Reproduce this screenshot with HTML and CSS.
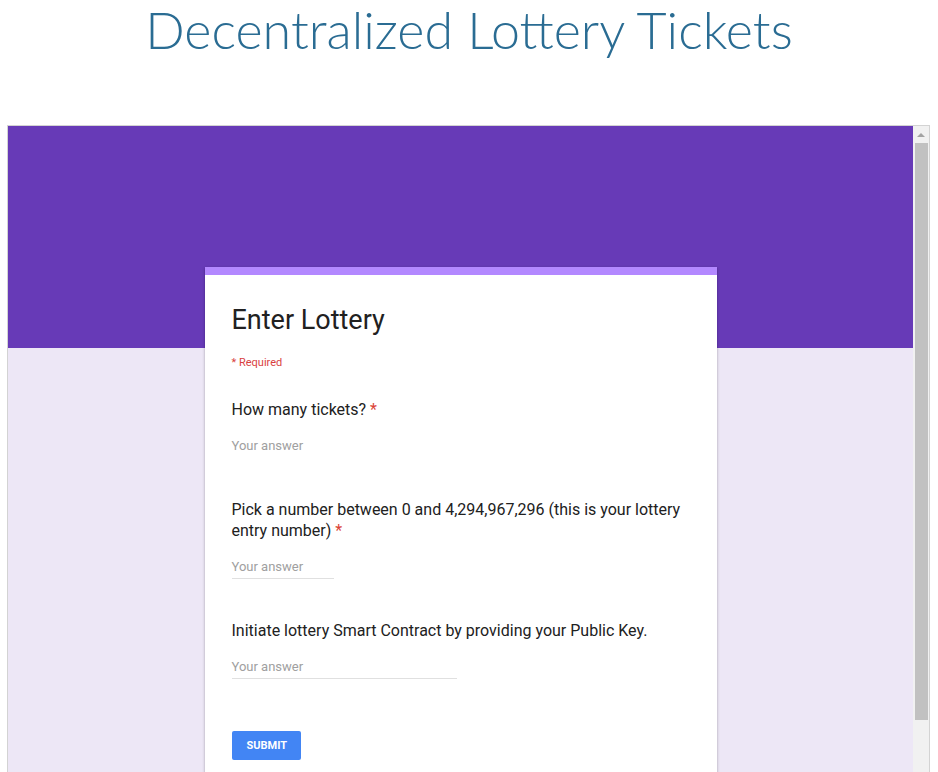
FILE: index.html
```html
<!DOCTYPE html>
<html>
<head>
<meta charset="utf-8">
<title>Decentralized Lottery Tickets</title>
<link rel="stylesheet" href="styles.css">
</head>
<body>
<h1 class="page-title">Decentralized Lottery Tickets</h1>
<div class="frame">
  <div class="form-view">
    <div class="card">
      <div class="form-title">Enter Lottery</div>
      <div class="required-note">* Required</div>
      <div class="question first">
        <div class="q-label">How many tickets? <span class="star">*</span></div>
        <div class="answer no-line">Your answer</div>
      </div>
      <div class="question">
        <div class="q-label">Pick a number between 0 and 4,294,967,296 (this is your lottery entry number) <span class="star">*</span></div>
        <div class="answer short">Your answer</div>
      </div>
      <div class="question">
        <div class="q-label">Initiate lottery Smart Contract by providing your Public Key.</div>
        <div class="answer long">Your answer</div>
      </div>
      <div class="submit-row"><span class="submit-btn">SUBMIT</span></div>
    </div>
  </div>
  <div class="scrollbar">
    <div class="scroll-up"><span class="arrow"></span></div>
    <div class="scroll-thumb"></div>
  </div>
</div>
</body>
</html>
```

FILE: styles.css
```css
html, body {
  margin: 0;
  padding: 0;
  overflow: hidden;
  background: #ffffff;
}
body {
  width: 938px;
  height: 772px;
}
.page-title {
  margin: 0;
  font-family: Lato, "Open Sans", sans-serif;
  font-weight: 300;
  font-size: 52px;
  line-height: 58px;
  text-align: center;
  color: #2a6c93;
}
.frame {
  margin: 67px 0 0 7px;
  width: 921px;
  height: 680px;
  border: 1px solid #d3d3d3;
  display: flex;
}
.form-view {
  flex: 1;
  background: linear-gradient(#673ab7 0, #673ab7 222px, #ede7f6 222px);
  display: flex;
  justify-content: center;
  align-items: flex-start;
  font-family: Roboto, Arial, sans-serif;
}
.card {
  margin-top: 141px;
  width: 512px;
  box-sizing: border-box;
  background: #fff;
  border-top: 8px solid #b388ff;
  padding: 27px 27px 40px 27px;
  box-shadow: 0 1px 3px rgba(0,0,0,0.25), 0 1px 1px rgba(0,0,0,0.12);
  color: #202124;
}
.form-title {
  font-size: 27px;
  line-height: 36px;
  font-weight: 400;
  color: #212121;
}
.required-note {
  margin-top: 17px;
  font-size: 11px;
  line-height: 16px;
  color: #d93f3f;
}
.question {
  margin-top: 41px;
}
.question.first {
  margin-top: 28px;
}
.q-label {
  font-size: 16px;
  line-height: 21px;
  color: #212121;
}
.star {
  color: #db4437;
}
.answer {
  margin-top: 16px;
  font-size: 13px;
  line-height: 20px;
  color: #a0a0a0;
  padding-bottom: 1px;
  border-bottom: 1px solid #e0e0e0;
}
.answer.no-line {
  border-bottom-color: transparent;
}
.answer.short {
  width: 102px;
}
.answer.long {
  width: 225px;
}
.submit-row {
  margin-top: 52px;
}
.submit-btn {
  display: inline-block;
  background: #4285f4;
  color: #fff;
  font-size: 11px;
  font-weight: 700;
  line-height: 29px;
  height: 29px;
  padding: 0 14px 0 15px;
  border-radius: 2px;
}
.scrollbar {
  width: 16px;
  background: #f1f1f1;
  display: flex;
  flex-direction: column;
  align-items: center;
}
.scroll-up {
  height: 17px;
  width: 16px;
  display: flex;
  justify-content: center;
  align-items: center;
}
.arrow {
  width: 0;
  height: 0;
  border-left: 4px solid transparent;
  border-right: 4px solid transparent;
  border-bottom: 4px solid #a3a3a3;
}
.scroll-thumb {
  width: 13px;
  height: 577px;
  background: #c1c1c1;
}
```
